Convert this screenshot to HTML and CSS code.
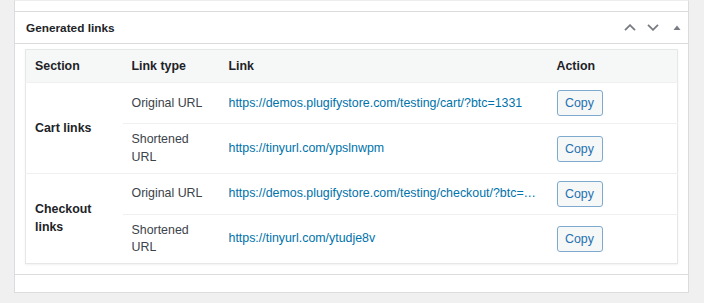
FILE: index.html
```html
<!DOCTYPE html>
<html lang="en">
<head>
    <meta charset="UTF-8">
    <title>Generated links</title>
    <link rel="stylesheet" href="styles.css">
</head>
<body>
    <div class="wrap">
        <div class="postbox-tail"></div>
        <div class="postbox">
            <div class="postbox-header">
                <h2 class="hndle">Generated links</h2>
                <div class="handle-actions">
                    <button class="handle-btn" aria-label="Move up">
                        <svg width="12" height="7" viewBox="0 0 12 7"><path d="M1 6.2 L6 1.2 L11 6.2" fill="none" stroke="currentColor" stroke-width="1.8"/></svg>
                    </button>
                    <button class="handle-btn" aria-label="Move down">
                        <svg width="12" height="7" viewBox="0 0 12 7"><path d="M1 0.8 L6 5.8 L11 0.8" fill="none" stroke="currentColor" stroke-width="1.8"/></svg>
                    </button>
                    <button class="handle-btn toggle" aria-label="Toggle panel">
                        <svg width="8" height="5" viewBox="0 0 8 5"><path d="M0.5 5 L4 0.5 L7.5 5 Z" fill="currentColor"/></svg>
                    </button>
                </div>
            </div>
            <div class="inside">
                <table class="links-table">
                    <colgroup>
                        <col class="col-section">
                        <col class="col-type">
                        <col class="col-link">
                        <col class="col-action">
                    </colgroup>
                    <thead>
                        <tr>
                            <th>Section</th>
                            <th>Link type</th>
                            <th>Link</th>
                            <th>Action</th>
                        </tr>
                    </thead>
                    <tbody>
                        <tr>
                            <td rowspan="2" class="section">Cart links</td>
                            <td>Original URL</td>
                            <td class="link"><a href="#">https://demos.plugifystore.com/testing/cart/?btc=1331</a></td>
                            <td><button class="button">Copy</button></td>
                        </tr>
                        <tr>
                            <td>Shortened URL</td>
                            <td class="link"><a href="#">https://tinyurl.com/ypslnwpm</a></td>
                            <td><button class="button">Copy</button></td>
                        </tr>
                        <tr>
                            <td rowspan="2" class="section">Checkout links</td>
                            <td>Original URL</td>
                            <td class="link"><a href="#" title="https://demos.plugifystore.com/testing/checkout/?btc=1332">https://demos.plugifystore.com/testing/checkout/?btc=…</a></td>
                            <td><button class="button">Copy</button></td>
                        </tr>
                        <tr>
                            <td>Shortened URL</td>
                            <td class="link"><a href="#">https://tinyurl.com/ytudje8v</a></td>
                            <td><button class="button">Copy</button></td>
                        </tr>
                    </tbody>
                </table>
            </div>
        </div>
        <div class="postbox-next"></div>
    </div>
</body>
</html>
```

FILE: styles.css
```css
:root {
    --page-bg: #f0f0f1; --box-bg: #ffffff; --box-border: #dcdcde;
    --row-line: #f0f0f1; --head-bg: #f6f7f7; --text: #3c434a; --title: #1d2327;
    --link: #0073aa; --icon: #787c82; --btn-border: #7eaad0; --btn-text: #2271b1;
}
body { margin: 0; background: var(--page-bg); font-family: "Liberation Sans", Arial, sans-serif; font-size: 12.4px; color: var(--text); }
.wrap { padding: 0 15px 0 14px; }
.postbox-tail { height: 10px; background: var(--box-bg); border: 1px solid var(--box-border); border-top-color: #ececec; border-bottom: none; }
.postbox { background: var(--box-bg); border: 1px solid var(--box-border); }
.postbox-header { display: flex; align-items: center; justify-content: space-between; height: 31px; border-bottom: 1px solid var(--box-border); }
.hndle { margin: 0; padding-left: 11px; font-size: 11.8px; font-weight: bold; color: var(--title); }
.handle-actions { display: flex; align-items: center; gap: 11px; padding-right: 7px; }
.handle-btn { display: flex; align-items: center; justify-content: center; width: 12px; height: 12px; padding: 0; border: none; background: none; color: var(--icon); }
.handle-btn.toggle { width: 8px; margin-left: 3px; }
.inside { padding: 5px 10px 10px 10px; }
.links-table { width: 100%; border-collapse: collapse; table-layout: fixed; border: 1px solid #e6e7e8; box-shadow: 0 1px 2px rgba(0,0,0,.06); }
.col-section { width: 97px; }
.col-type { width: 97px; }
.col-action { width: 130px; }
.links-table th { text-align: left; font-weight: bold; color: var(--title); background: var(--head-bg); padding: 8px 10px 7px 9px; line-height: 17.4px; }
.links-table td { padding: 7px 10px 7px 9px; line-height: 17.2px; border-top: 1px solid var(--row-line); vertical-align: middle; }
.links-table td.section { font-weight: bold; color: var(--title); }
.links-table td.link { white-space: nowrap; }
.links-table a { color: var(--link); text-decoration: none; }
.button { font-family: inherit; font-size: 12.4px; color: var(--btn-text); background: #f6f7f7; border: 1px solid var(--btn-border); border-radius: 3px; height: 26px; width: 46px; padding: 0; cursor: pointer; }
.postbox-next { height: 17px; background: var(--box-bg); border: 1px solid var(--box-border); border-top: none; }
```
